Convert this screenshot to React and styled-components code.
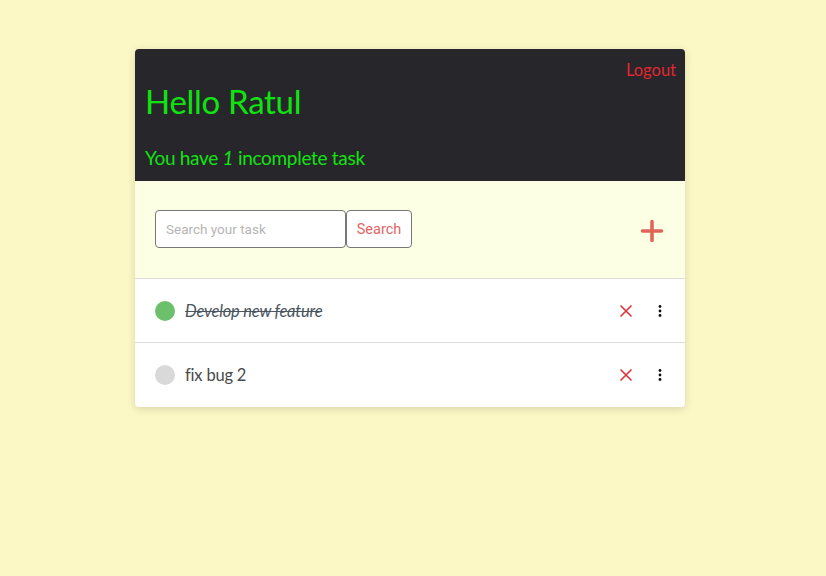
import React from "react";
import styled, { createGlobalStyle } from "styled-components";

const Global = createGlobalStyle`
  html, body { margin: 0; padding: 0; }
  body {
    background: #fcf8c5;
    font-family: "Lato", "Noto Sans", sans-serif;
    min-height: 576px;
  }
`;

const Page = styled.div`
  padding-top: 49px;
  display: flex;
  justify-content: center;
  padding-right: 6px;
`;

const Card = styled.div`
  width: 550px;
  border-radius: 4px;
  overflow: hidden;
  background: #fff;
  box-shadow: 0 2px 8px rgba(0, 0, 0, 0.15);
`;

const Header = styled.header`
  background: #26262b;
  height: 132px;
  padding: 10px 9px 0 10px;
  box-sizing: border-box;
  display: flex;
  flex-direction: column;
`;

const LogoutRow = styled.div`
  display: flex;
  justify-content: flex-end;
`;

const Logout = styled.a`
  color: #e4262f;
  font-size: 16.5px;
  line-height: 22px;
  cursor: pointer;
`;

const Hello = styled.h1`
  margin: 0;
  color: #11e311;
  font-weight: 400;
  font-size: 33px;
  line-height: 40px;
  letter-spacing: -0.3px;
`;

const Summary = styled.p`
  margin: 0;
  margin-top: 25px;
  color: #11e311;
  font-size: 19px;
  line-height: 24px;
  letter-spacing: -0.3px;
  em { font-style: italic; }
`;

const Toolbar = styled.div`
  background: #fcffe3;
  height: 98px;
  box-sizing: border-box;
  border-bottom: 1px solid #dcdcdc;
  display: flex;
  align-items: center;
  justify-content: space-between;
  padding: 0 21px 1px 20px;
`;

const SearchGroup = styled.div`
  display: flex;
  align-items: center;
`;

const SearchInput = styled.input`
  width: 191px;
  height: 38px;
  box-sizing: border-box;
  border: 1px solid #777;
  border-radius: 4px;
  padding: 0 10px;
  font-family: "Roboto", sans-serif;
  font-size: 13.5px;
  background: #fff;
  &::placeholder { color: #b5b5b5; }
`;

const SearchButton = styled.button`
  height: 38px;
  width: 66px;
  box-sizing: border-box;
  border: 1px solid #777;
  border-radius: 4px;
  background: #fff;
  color: #e06666;
  font-family: "Roboto", sans-serif;
  font-size: 14.5px;
  padding: 0;
`;

const AddButton = styled.button`
  border: none;
  background: none;
  padding: 0;
  display: flex;
  margin-top: 4px;
`;

const Row = styled.div`
  height: 64px;
  box-sizing: border-box;
  border-bottom: ${(p) => (p.$last ? "none" : "1px solid #dcdcdc")};
  display: flex;
  align-items: center;
  padding: 0 20px;
`;

const Dot = styled.span`
  width: 20px;
  height: 20px;
  border-radius: 50%;
  background: ${(p) => (p.$done ? "#6cc06c" : "#d9d9d9")};
  flex: none;
`;

const TaskText = styled.span`
  margin-left: 10px;
  flex: 1;
  font-size: 16.5px;
  color: ${(p) => (p.$done ? "#4a5560" : "#4a4a4a")};
  font-style: ${(p) => (p.$done ? "italic" : "normal")};
  text-decoration: ${(p) => (p.$done ? "line-through" : "none")};
  letter-spacing: -0.2px;
`;

const IconBtn = styled.button`
  border: none;
  background: none;
  padding: 0;
  display: flex;
  align-items: center;
  justify-content: center;
  width: ${(p) => p.$w || 20}px;
`;

const Actions = styled.div`
  display: flex;
  align-items: center;
  gap: 22px;
`;

const CloseIcon = () => (
  <svg width="14" height="14" viewBox="0 0 14 14">
    <path d="M2 2 L12 12 M12 2 L2 12" stroke="#d9383f" strokeWidth="1.7" strokeLinecap="round" />
  </svg>
);

const Kebab = () => (
  <svg width="4" height="12" viewBox="0 0 4 12">
    <circle cx="2" cy="1.5" r="1.4" fill="#111" />
    <circle cx="2" cy="6" r="1.4" fill="#111" />
    <circle cx="2" cy="10.5" r="1.4" fill="#111" />
  </svg>
);

const PlusIcon = () => (
  <svg width="24" height="24" viewBox="0 0 24 24">
    <path d="M12 2.5 V21.5 M2.5 12 H21.5" stroke="#e0665c" strokeWidth="3.6" strokeLinecap="round" />
  </svg>
);

const tasks = [
  { id: 1, text: "Develop new feature", done: true },
  { id: 2, text: "fix bug 2", done: false },
];

export default function App() {
  return (
    <>
      <Global />
      <Page>
        <Card>
          <Header>
            <LogoutRow>
              <Logout>Logout</Logout>
            </LogoutRow>
            <Hello>Hello Ratul</Hello>
            <Summary>
              You have <em>1</em> incomplete task
            </Summary>
          </Header>
          <Toolbar>
            <SearchGroup>
              <SearchInput placeholder="Search your task" />
              <SearchButton>Search</SearchButton>
            </SearchGroup>
            <AddButton aria-label="Add task">
              <PlusIcon />
            </AddButton>
          </Toolbar>
          {tasks.map((t, i) => (
            <Row key={t.id} $last={i === tasks.length - 1}>
              <Dot $done={t.done} />
              <TaskText $done={t.done}>{t.text}</TaskText>
              <Actions>
                <IconBtn $w={14}>
                  <CloseIcon />
                </IconBtn>
                <IconBtn $w={10}>
                  <Kebab />
                </IconBtn>
              </Actions>
            </Row>
          ))}
        </Card>
      </Page>
    </>
  );
}
